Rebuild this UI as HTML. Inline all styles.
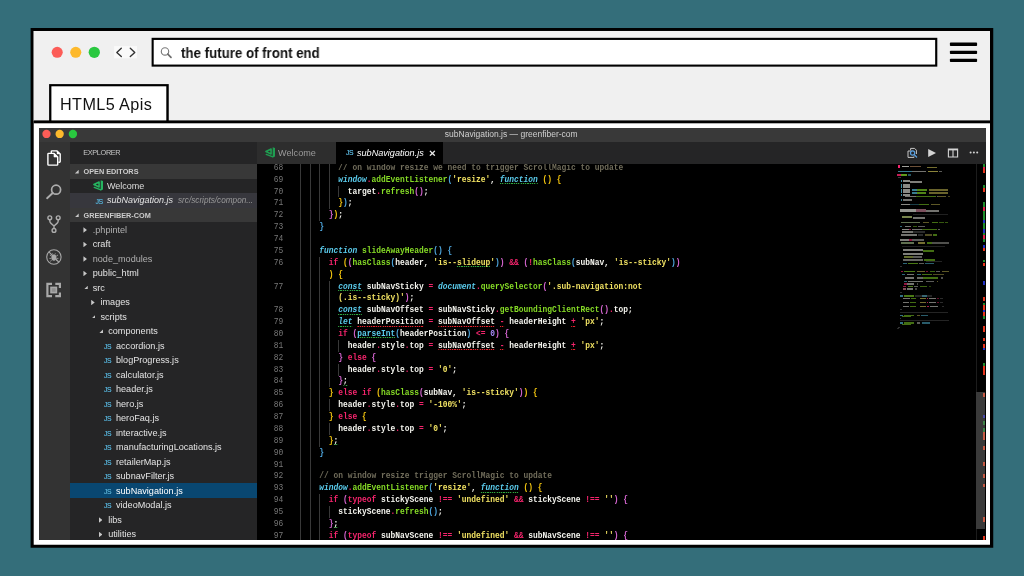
<!DOCTYPE html>
<html lang="en">
<head>
<meta charset="utf-8">
<title>HTML5 Apis</title>
<style>
*{box-sizing:border-box;margin:0;padding:0}
html,body{width:1024px;height:576px;overflow:hidden}
body{background:#346e7a;font-family:"Liberation Sans",sans-serif;position:relative}
.dot{position:absolute;border-radius:50%}
#q{position:absolute;left:181.4px;top:45px;font-weight:bold;font-size:14.3px;line-height:17px;color:#111;white-space:nowrap;transform:scaleX(.929);transform-origin:0 0;will-change:transform}
#tabt{position:absolute;left:59.8px;top:93.5px;font-size:16.2px;line-height:20px;color:#111;white-space:nowrap;letter-spacing:.4px;will-change:transform}

/* ---------- editor screenshot ---------- */
#shot{position:absolute;left:39px;top:128px;width:946.5px;height:412px;background:#000;overflow:hidden;font-family:"Liberation Sans",sans-serif;color:#ccc}
#shot div,#shot span,#shot i{position:absolute;display:block;white-space:nowrap}
#titlebar{left:0;top:0;width:946.5px;height:13.6px;background:#393939}
#title{left:0;width:944.5px;top:1px;text-align:center;font-size:8.5px;line-height:11px;color:#d0d0d0}
#act{left:0;top:13.6px;width:31px;height:399px;background:#333}
#side{left:31px;top:13.6px;width:186.5px;height:399px;background:#252526;overflow:hidden}
#tabs{left:217.5px;top:13.6px;width:729px;height:22.6px;background:#252526}
.sh{left:0;width:186.5px;height:14.4px;background:#383838;font-weight:bold;font-size:7.3px;line-height:16.4px;color:#ccc;letter-spacing:0}
.sh b{position:absolute;left:13.5px}
.sh .ao{left:4.9px;top:5.6px}
#explorer{left:13.3px;top:5.8px;font-size:7.3px;line-height:11px;color:#c6c6c6;letter-spacing:-.35px}
.tr{left:0;width:186.5px;height:14.5px;font-size:9.1px;line-height:14.5px;color:#e4e4e4}
.tr.dim{color:#b0b0b0}
.tr.sel{background:#094771;color:#fff;box-shadow:0 -1px 0 #094771}
.tl{top:0}
.ar{top:4.4px;width:3.5px;height:5.7px;background:#c8c8c8;clip-path:polygon(0 0,100% 50%,0 100%)}
.ao{top:4.9px;width:3.8px;height:3.8px;background:#c8c8c8;clip-path:polygon(100% 0,100% 100%,0 100%)}
.js{top:.9px;font-size:6.9px;color:#52a6ca;letter-spacing:-.45px;text-shadow:0 0 .5px #52a6ca}
.tr .js{top:.9px;font-size:6.9px;color:#52a6ca;letter-spacing:-.45px;text-shadow:0 0 .5px #52a6ca}
.oe{left:0;width:186.5px;height:14.5px;font-size:9px;line-height:15.6px;color:#ddd}
.desc{font-size:8.2px;color:#999;font-style:italic}

.etab{top:0;height:22.6px;font-size:9.1px;line-height:22.6px}
#shot .cl{left:0;height:12px;line-height:12px;font-family:"Liberation Mono",monospace;font-size:9.000px;font-weight:bold;color:#f4f4ee;white-space:pre;padding-left:296.94px;width:1100px;transform:scaleX(0.87963);transform-origin:0 0}
#shot .cl span{position:static;display:inline;white-space:pre}
#shot .cl .ln{position:absolute;display:block;left:254.65px;width:23.08px;text-align:right;color:#787878;font-weight:normal}
.cm{color:#716d5b}
.k,.o,.or{color:#f4246c}
.i,.ig{color:#5bcdee;font-style:italic}
.f{color:#86dc26}
.s,.sg{color:#f0e162}
.n{color:#a98bfa}
.bg{color:#5bcdee}
.c1{color:#f2c40f}
.c2{color:#d566d0}
.c3{color:#4ea6dd}
.ig,.sg,.bg,.wg{background:repeating-linear-gradient(90deg,#2fa83e 0 1.3px,rgba(47,168,62,.25) 1.3px 2.6px) 0 calc(100% - .4px)/100% 1.1px no-repeat}
.wr,.or{background:repeating-linear-gradient(90deg,#e8222c 0 1.3px,rgba(232,34,44,.25) 1.3px 2.6px) 0 calc(100% - .4px)/100% 1.1px no-repeat}
.gd{width:1px;background:#383838}
#mini{filter:blur(.35px)}
.ov{left:943.5px;width:2.9px}
</style>
</head>
<body>
<svg id="chrome" width="1024" height="576" viewBox="0 0 1024 576" style="position:absolute;left:0;top:0">
  <rect x="30.6" y="28" width="962.65" height="519.75" fill="#000"/>
  <rect x="33.7" y="31" width="956.3" height="513.75" fill="#fff"/>
  <rect x="33.7" y="31" width="956.3" height="90" fill="#f0f0f0"/>
  <rect x="33.7" y="120.4" width="956.3" height="2.9" fill="#000"/>
  <circle cx="57.2" cy="52.3" r="5.55" fill="#fc5c57"/>
  <circle cx="75.75" cy="52.3" r="5.55" fill="#fdb92c"/>
  <circle cx="94.3" cy="52.3" r="5.65" fill="#2ac840"/>
  <rect x="114.1" y="46.1" width="22.9" height="12.2" fill="#fafafa"/>
  <path d="M121.3 48.2 L116.8 52.4 L121.3 56.6 M130.3 48.2 L134.8 52.4 L130.3 56.6" fill="none" stroke="#333" stroke-width="1.35" stroke-linecap="round" stroke-linejoin="round"/>
  <rect x="151.6" y="37.8" width="785.7" height="28.85" fill="#000"/>
  <rect x="153.7" y="39.95" width="781.45" height="24.6" fill="#fff"/>
  <circle cx="165" cy="51.4" r="3.7" fill="none" stroke="#7a7a7a" stroke-width="1.15"/>
  <path d="M167.8 54.2 L171 57.3" stroke="#6c6c6c" stroke-width="1.7" stroke-linecap="round"/>
  <g fill="#000"><rect x="949.9" y="42.6" width="27.2" height="3.4" rx=".8"/><rect x="949.9" y="50.7" width="27.2" height="3.4" rx=".8"/><rect x="949.9" y="58.7" width="27.2" height="3.4" rx=".8"/></g>
  <rect x="49.1" y="84.1" width="119.65" height="37" fill="#000"/>
  <rect x="51.4" y="86.3" width="114.9" height="34.1" fill="#fff"/>
</svg>
<span id="q">the future of front end</span>
<span id="tabt">HTML5 Apis</span>

<div id="shot"><div id="ly" style="left:0;top:0;width:946.5px;height:412px;will-change:transform">
  <div id="titlebar">
    <svg width="50" height="14" viewBox="0 0 50 14" style="position:absolute;left:0;top:0"><circle cx="7.5" cy="5.95" r="4.15" fill="#fc5d57"/><circle cx="20.65" cy="5.95" r="4.15" fill="#fdb92c"/><circle cx="33.9" cy="5.95" r="4.2" fill="#29c73f"/></svg>
    <div id="title">subNavigation.js — greenfiber-com</div>
  </div>

  <div id="act">
    <svg width="31" height="180" viewBox="0 0 31 180" style="position:absolute;left:0;top:0">
      <!-- files -->
      <g fill="none" stroke="#fff" stroke-width="1.4" stroke-linejoin="round">
        <path d="M12.3 11.2 V9.6 Q12.3 8.9 13 8.9 H18 L21.2 12 V19.6 Q21.2 20.3 20.5 20.3 H19.4"/>
        <path d="M9.6 11.4 H15 L18.7 15 V22.4 Q18.7 23.1 18 23.1 H9.6 Q8.9 23.1 8.9 22.4 V12.1 Q8.9 11.4 9.6 11.4 Z"/>
        <path d="M15 11.4 V15 H18.7 Z" fill="#fff" stroke-width=".6"/>
        <path d="M18 8.9 V12 H21.2 Z" fill="#fff" stroke-width=".4"/>
      </g>
      <!-- search -->
      <g fill="none" stroke="#adadad" stroke-width="1.7" stroke-linecap="round">
        <circle cx="17.1" cy="47.7" r="4.5"/>
        <path d="M13.7 51 L8.1 56.2" stroke-width="1.9"/>
      </g>
      <!-- git -->
      <g fill="none" stroke="#adadad" stroke-width="1.4">
        <circle cx="10.8" cy="75.8" r="1.9"/>
        <circle cx="19.2" cy="75.8" r="1.9"/>
        <circle cx="15" cy="88.4" r="1.9"/>
        <path d="M10.8 77.7 V79 Q10.8 80.4 12 81.4 L15 84 L18 81.4 Q19.2 80.4 19.2 79 V77.7 M15 84 V86.5" stroke-linejoin="round"/>
      </g>
      <!-- debug -->
      <g fill="none" stroke="#a8a8a8" stroke-width="1.1">
        <circle cx="14.9" cy="115" r="7.2"/>
        <path d="M9.9 109.9 L19.9 120.1"/>
        <ellipse cx="14.9" cy="115.6" rx="2.5" ry="3.1" fill="#a8a8a8" stroke="none"/>
        <path d="M10.8 113 L12.6 114.2 M19 113 L17.2 114.2 M10.4 116.4 H12.4 M19.4 116.4 H17.4 M11.2 119.4 L12.8 118 M18.6 119.4 L17 118 M13.4 111.4 L14 112.6 M16.4 111.4 L15.8 112.6" stroke-width=".8"/>
      </g>
      <!-- extensions -->
      <g fill="#a8a8a8">
        <path d="M7.3 140.7 H13 V142.9 H9.5 V153 H13 V155.2 H7.3 Z"/>
        <path d="M22 140.7 H16.3 V142.9 H19.8 V146 H22 Z"/>
        <path d="M22 155.2 H16.3 V153 H19.8 V150.4 H22 Z"/>
        <rect x="11.2" y="144.6" width="7" height="6.8"/>
        <rect x="12.8" y="146.2" width="3.8" height="3.6" fill="#8e8e8e"/>
      </g>
    </svg>
  </div>

  <div id="side">
    <span id="explorer">EXPLORER</span>
    <div class="sh" style="top:22.6px"><span class="ao"></span><b>OPEN EDITORS</b></div>
    <div class="oe" style="top:37px">
      <svg width="10.4" height="10.6" viewBox="0 0 10.4 10.6" style="position:absolute;left:23.1px;top:1.9px"><path d="M7.7 .2 L10.3 1.2 V9.4 L7.7 10.4 Z" fill="#25b560"/><path d="M6.1 2 L.9 4.5 L6.1 7 Z" fill="none" stroke="#25b560" stroke-width="1.5" stroke-linejoin="round"/><path d="M1.2 7.4 L7.9 9.9" fill="none" stroke="#25b560" stroke-width="1.3" stroke-linecap="round"/></svg>
      <span class="tl" style="left:37px">Welcome</span>
    </div>
    <div class="oe" style="top:51.5px;height:14.7px;background:#37373d;color:#e4e4e4">
      <span class="js" style="left:25.5px">JS</span>
      <span class="tl" style="left:37px;font-style:italic">subNavigation.js</span>
      <span class="tl desc" style="left:108px">src/scripts/compon...</span>
    </div>
    <div class="sh" style="top:66.2px"><span class="ao"></span><b>GREENFIBER-COM</b></div>
<div class="tr dim" style="top:81.15px"><span class="ar" style="left:13.45px"></span><span class="tl" style="left:22.75px">.phpintel</span></div>
<div class="tr" style="top:95.65px"><span class="ar" style="left:13.45px"></span><span class="tl" style="left:22.75px">craft</span></div>
<div class="tr dim" style="top:110.15px"><span class="ar" style="left:13.45px"></span><span class="tl" style="left:22.75px">node_modules</span></div>
<div class="tr" style="top:124.65px"><span class="ar" style="left:13.45px"></span><span class="tl" style="left:22.75px">public_html</span></div>
<div class="tr" style="top:139.15px"><span class="ao" style="left:13.95px"></span><span class="tl" style="left:22.75px">src</span></div>
<div class="tr" style="top:153.65px"><span class="ar" style="left:21.20px"></span><span class="tl" style="left:30.50px">images</span></div>
<div class="tr" style="top:168.15px"><span class="ao" style="left:21.70px"></span><span class="tl" style="left:30.50px">scripts</span></div>
<div class="tr" style="top:182.65px"><span class="ao" style="left:29.45px"></span><span class="tl" style="left:38.25px">components</span></div>
<div class="tr" style="top:197.15px"><span class="js" style="left:34.00px">JS</span><span class="tl" style="left:46.00px">accordion.js</span></div>
<div class="tr" style="top:211.65px"><span class="js" style="left:34.00px">JS</span><span class="tl" style="left:46.00px">blogProgress.js</span></div>
<div class="tr" style="top:226.15px"><span class="js" style="left:34.00px">JS</span><span class="tl" style="left:46.00px">calculator.js</span></div>
<div class="tr" style="top:240.65px"><span class="js" style="left:34.00px">JS</span><span class="tl" style="left:46.00px">header.js</span></div>
<div class="tr" style="top:255.15px"><span class="js" style="left:34.00px">JS</span><span class="tl" style="left:46.00px">hero.js</span></div>
<div class="tr" style="top:269.65px"><span class="js" style="left:34.00px">JS</span><span class="tl" style="left:46.00px">heroFaq.js</span></div>
<div class="tr" style="top:284.15px"><span class="js" style="left:34.00px">JS</span><span class="tl" style="left:46.00px">interactive.js</span></div>
<div class="tr" style="top:298.65px"><span class="js" style="left:34.00px">JS</span><span class="tl" style="left:46.00px">manufacturingLocations.js</span></div>
<div class="tr" style="top:313.15px"><span class="js" style="left:34.00px">JS</span><span class="tl" style="left:46.00px">retailerMap.js</span></div>
<div class="tr" style="top:327.65px"><span class="js" style="left:34.00px">JS</span><span class="tl" style="left:46.00px">subnavFilter.js</span></div>
<div class="tr sel" style="top:342.15px"><span class="js" style="left:34.00px">JS</span><span class="tl" style="left:46.00px">subNavigation.js</span></div>
<div class="tr" style="top:356.65px"><span class="js" style="left:34.00px">JS</span><span class="tl" style="left:46.00px">videoModal.js</span></div>
<div class="tr" style="top:371.15px"><span class="ar" style="left:28.95px"></span><span class="tl" style="left:38.25px">libs</span></div>
<div class="tr" style="top:385.65px"><span class="ar" style="left:28.95px"></span><span class="tl" style="left:38.25px">utilities</span></div>
  </div>

  <div id="tabs">
    <div class="etab" style="left:0;width:79px;background:#2d2d2d;color:#9a9a9a">
      <svg width="10.4" height="10.6" viewBox="0 0 10.4 10.6" style="position:absolute;left:8.2px;top:5.8px"><path d="M7.7 .2 L10.3 1.2 V9.4 L7.7 10.4 Z" fill="#1f9d51"/><path d="M6.1 2 L.9 4.5 L6.1 7 Z" fill="none" stroke="#1f9d51" stroke-width="1.5" stroke-linejoin="round"/><path d="M1.2 7.4 L7.9 9.9" fill="none" stroke="#1f9d51" stroke-width="1.3" stroke-linecap="round"/></svg>
      <span style="left:21.6px;top:0">Welcome</span>
    </div>
    <div class="etab" style="left:79px;width:107px;background:#000;color:#fff">
      <span class="js" style="left:10.5px;top:.6px">JS</span>
      <span style="left:21.5px;top:0;font-style:italic">subNavigation.js</span>
      <span style="left:93.6px;top:.6px;font-size:11.5px;font-weight:bold;color:#eee">&#215;</span>
    </div>
    <svg width="80" height="14" viewBox="0 0 80 14" style="position:absolute;left:646px;top:4.4px">
      <!-- find in file -->
      <g fill="none" stroke="#c5c5c5" stroke-width="1">
        <path d="M7.6 4.2 V2.4 H11.6 L13.4 4.2 V8"/>
        <path d="M5 5 H8.4 M5 5 V11.4 H11 V10.4"/>
      </g>
      <circle cx="9.6" cy="7" r="2.1" fill="none" stroke="#5aa0e0" stroke-width="1.2"/>
      <path d="M11.2 8.6 L13.6 11" stroke="#5aa0e0" stroke-width="1.3" stroke-linecap="round"/>
      <!-- play -->
      <path d="M25.2 2.9 L33 7 L25.2 11.1 Z" fill="#d4d4d4"/>
      <!-- split -->
      <path d="M45.4 3 H54.6 V11 H45.4 Z M50 3 V11" fill="none" stroke="#d4d4d4" stroke-width="1.1"/>
      <path d="M45.4 3 H54.6 V4.4 H45.4 Z" fill="#d4d4d4"/>
      <!-- more -->
      <circle cx="67.6" cy="6.6" r="1" fill="#d4d4d4"/><circle cx="70.9" cy="6.6" r="1" fill="#d4d4d4"/><circle cx="74.2" cy="6.6" r="1" fill="#d4d4d4"/>
    </svg>
  </div>

  <div id="editor" style="left:217.5px;top:36.2px;width:729px;height:376px;overflow:hidden">
    <div style="left:-217.5px;top:-36.2px;width:946.5px;height:412px;will-change:transform">
<i class="gd" style="left:261.20px;top:33.87px;height:379.84px"></i>
<i class="gd" style="left:270.70px;top:33.87px;height:379.84px"></i>
<i class="gd" style="left:280.20px;top:33.87px;height:59.35px"></i>
<i class="gd" style="left:280.20px;top:128.82px;height:189.92px"></i>
<i class="gd" style="left:280.20px;top:366.22px;height:47.48px"></i>
<i class="gd" style="left:289.70px;top:33.87px;height:47.48px"></i>
<i class="gd" style="left:289.70px;top:152.56px;height:106.83px"></i>
<i class="gd" style="left:289.70px;top:271.26px;height:11.87px"></i>
<i class="gd" style="left:289.70px;top:295.00px;height:11.87px"></i>
<i class="gd" style="left:289.70px;top:378.09px;height:11.87px"></i>
<i class="gd" style="left:299.20px;top:57.61px;height:11.87px"></i>
<i class="gd" style="left:299.20px;top:211.91px;height:11.87px"></i>
<i class="gd" style="left:299.20px;top:235.66px;height:11.87px"></i>
<div class="cl" style="top:33.80px"><span class="ln">68</span>        <span class="cm">// on window resize we need to trigger ScrollMagic to update</span></div>
<div class="cl" style="top:45.67px"><span class="ln">69</span>        <span class="i">window</span><span class="o">.</span><span class="f">addEventListener</span><span class="c3">(</span><span class="s">&#x27;resize&#x27;</span>, <span class="ig">function</span> <span class="c1">()</span> <span class="c1">{</span></div>
<div class="cl" style="top:57.54px"><span class="ln">70</span>          target<span class="o">.</span><span class="f">refresh</span><span class="c2">()</span>;</div>
<div class="cl" style="top:69.41px"><span class="ln">71</span>        <span class="c1">}</span><span class="c3">)</span>;</div>
<div class="cl" style="top:81.28px"><span class="ln">72</span>      <span class="c2">}</span><span class="c1">)</span>;</div>
<div class="cl" style="top:93.15px"><span class="ln">73</span>    <span class="c3">}</span></div>
<div class="cl" style="top:105.02px"><span class="ln">74</span></div>
<div class="cl" style="top:116.89px"><span class="ln">75</span>    <span class="i">function</span> <span class="f">slideAwayHeader</span><span class="c3">()</span> <span class="c3">{</span></div>
<div class="cl" style="top:128.76px"><span class="ln">76</span>      <span class="k">if</span> <span class="c1">(</span><span class="c2">(</span><span class="f">hasClass</span><span class="c3">(</span>header, <span class="s">&#x27;is--</span><span class="sg">slideup</span><span class="s">&#x27;</span><span class="c3">)</span><span class="c2">)</span> <span class="k">&amp;&amp;</span> <span class="c2">(</span><span class="k">!</span><span class="f">hasClass</span><span class="c3">(</span>subNav, <span class="s">&#x27;is--sticky&#x27;</span><span class="c3">)</span><span class="c2">)</span></div>
<div class="cl" style="top:140.63px"><span class="ln"></span>      <span class="c1">)</span> <span class="c1">{</span></div>
<div class="cl" style="top:152.50px"><span class="ln">77</span>        <span class="ig">const</span> subNavSticky <span class="o">=</span> <span class="i">document</span><span class="o">.</span><span class="f">querySelector</span><span class="c2">(</span><span class="s">&#x27;.sub-navigation:not</span></div>
<div class="cl" style="top:164.37px"><span class="ln"></span>        <span class="s">(.is--sticky)&#x27;</span><span class="c2">)</span>;</div>
<div class="cl" style="top:176.24px"><span class="ln">78</span>        <span class="ig">const</span> subNavOffset <span class="o">=</span> subNavSticky<span class="o">.</span><span class="f">getBoundingClientRect</span><span class="c2">()</span><span class="o">.</span>top;</div>
<div class="cl" style="top:188.11px"><span class="ln">79</span>        <span class="ig">let</span> <span class="wr">headerPosition</span> <span class="o">=</span> <span class="wr">subNavOffset</span> <span class="or">-</span> headerHeight <span class="or">+</span> <span class="s">&#x27;px&#x27;</span>;</div>
<div class="cl" style="top:199.98px"><span class="ln">80</span>        <span class="k">if</span> <span class="c2">(</span><span class="bg">parseInt</span><span class="c3">(</span>headerPosition<span class="c3">)</span> <span class="o">&lt;=</span> <span class="n">0</span><span class="c2">)</span> <span class="c2">{</span></div>
<div class="cl" style="top:211.85px"><span class="ln">81</span>          header<span class="o">.</span>style<span class="o">.</span>top <span class="o">=</span> <span class="wr">subNavOffset</span> <span class="or">-</span> headerHeight <span class="or">+</span> <span class="s">&#x27;px&#x27;</span>;</div>
<div class="cl" style="top:223.72px"><span class="ln">82</span>        <span class="c2">}</span> <span class="k">else</span> <span class="c2">{</span></div>
<div class="cl" style="top:235.59px"><span class="ln">83</span>          header<span class="o">.</span>style<span class="o">.</span>top <span class="o">=</span> <span class="s">&#x27;0&#x27;</span>;</div>
<div class="cl" style="top:247.46px"><span class="ln">84</span>        <span class="c2">}</span><span class="wg">;</span></div>
<div class="cl" style="top:259.33px"><span class="ln">85</span>      <span class="c1">}</span> <span class="k">else if</span> <span class="c1">(</span><span class="f">hasClass</span><span class="c2">(</span>subNav, <span class="s">&#x27;is--sticky&#x27;</span><span class="c2">)</span><span class="c1">)</span> <span class="c1">{</span></div>
<div class="cl" style="top:271.20px"><span class="ln">86</span>        header<span class="o">.</span>style<span class="o">.</span>top <span class="o">=</span> <span class="s">&#x27;-100%&#x27;</span>;</div>
<div class="cl" style="top:283.07px"><span class="ln">87</span>      <span class="c1">}</span> <span class="k">else</span> <span class="c1">{</span></div>
<div class="cl" style="top:294.94px"><span class="ln">88</span>        header<span class="o">.</span>style<span class="o">.</span>top <span class="o">=</span> <span class="s">&#x27;0&#x27;</span>;</div>
<div class="cl" style="top:306.81px"><span class="ln">89</span>      <span class="c1">}</span><span class="wg">;</span></div>
<div class="cl" style="top:318.68px"><span class="ln">90</span>    <span class="c3">}</span></div>
<div class="cl" style="top:330.55px"><span class="ln">91</span></div>
<div class="cl" style="top:342.42px"><span class="ln">92</span>    <span class="cm">// on window resize trigger ScrollMagic to update</span></div>
<div class="cl" style="top:354.29px"><span class="ln">93</span>    <span class="i">window</span><span class="o">.</span><span class="f">addEventListener</span><span class="c3">(</span><span class="s">&#x27;resize&#x27;</span>, <span class="ig">function</span> <span class="c1">()</span> <span class="c1">{</span></div>
<div class="cl" style="top:366.16px"><span class="ln">94</span>      <span class="k">if</span> <span class="c2">(</span><span class="k">typeof</span> stickyScene <span class="k">!==</span> <span class="s">&#x27;undefined&#x27;</span> <span class="k">&amp;&amp;</span> stickyScene <span class="k">!==</span> <span class="s">&#x27;&#x27;</span><span class="c2">)</span> <span class="c2">{</span></div>
<div class="cl" style="top:378.03px"><span class="ln">95</span>        stickyScene<span class="o">.</span><span class="f">refresh</span><span class="c3">()</span>;</div>
<div class="cl" style="top:389.90px"><span class="ln">96</span>      <span class="c2">}</span><span class="wg">;</span></div>
<div class="cl" style="top:401.77px"><span class="ln">97</span>      <span class="k">if</span> <span class="c2">(</span><span class="k">typeof</span> subNavScene <span class="k">!==</span> <span class="s">&#x27;undefined&#x27;</span> <span class="k">&amp;&amp;</span> subNavScene <span class="k">!==</span> <span class="s">&#x27;&#x27;</span><span class="c2">)</span> <span class="c2">{</span></div>
      <div id="mini" style="left:0;top:0;width:946.5px;height:412px">
<i style="left:858.7px;top:36.8px;width:2.6px;height:3.2px;background:repeating-linear-gradient(180deg,#f4246c 0 .85px,transparent .85px 1.25px);opacity:1.00"></i>
<i style="left:863.0px;top:37.6px;width:6.7px;height:1.4px;background:#e6e6de;opacity:0.70"></i>
<i style="left:870.7px;top:37.6px;width:11.3px;height:1.4px;background:#d8a070;opacity:0.50"></i>
<i style="left:888.0px;top:39.2px;width:10.0px;height:1.1px;background:#e8dc60;opacity:0.50"></i>
<i style="left:859.0px;top:43.0px;width:14.0px;height:1.3px;background:#5bcdee;opacity:0.60"></i>
<i style="left:873.0px;top:43.0px;width:14.0px;height:1.3px;background:#e6e6de;opacity:0.50"></i>
<i style="left:889.0px;top:43.0px;width:10.0px;height:1.3px;background:#e8dc60;opacity:0.60"></i>
<i style="left:900.0px;top:43.0px;width:2.5px;height:1.3px;background:#e6e6de;opacity:0.40"></i>
<i style="left:858.2px;top:46.4px;width:3.8px;height:1.3px;background:#f4246c;opacity:0.80"></i>
<i style="left:862.0px;top:46.4px;width:5.6px;height:1.3px;background:#86dc26;opacity:0.70"></i>
<i style="left:868.6px;top:46.4px;width:3.4px;height:1.3px;background:#5bcdee;opacity:0.40"></i>
<i style="left:859.0px;top:49.0px;width:3.0px;height:1.1px;background:#909090;opacity:0.40"></i>
<i style="left:861.9px;top:51.7px;width:1.5px;height:16.7px;background:repeating-linear-gradient(180deg,#5bcdee 0 .85px,transparent .85px 1.25px);opacity:0.70"></i>
<i style="left:864.0px;top:51.7px;width:6.7px;height:16.7px;background:repeating-linear-gradient(180deg,#e6e6de 0 .85px,transparent .85px 1.25px);opacity:0.60"></i>
<i style="left:870.7px;top:52.7px;width:12.3px;height:3.3px;background:repeating-linear-gradient(180deg,#e6e6de 0 .85px,transparent .85px 1.25px);opacity:0.55"></i>
<i style="left:872.8px;top:60.6px;width:5.2px;height:2.0px;background:#5bcdee;opacity:0.60"></i>
<i style="left:878.0px;top:60.6px;width:10.4px;height:2.0px;background:#86dc26;opacity:0.60"></i>
<i style="left:889.5px;top:60.6px;width:19.5px;height:2.0px;background:#e8dc60;opacity:0.45"></i>
<i style="left:872.8px;top:64.2px;width:5.2px;height:2.0px;background:#5bcdee;opacity:0.60"></i>
<i style="left:878.0px;top:64.2px;width:9.4px;height:2.0px;background:#86dc26;opacity:0.60"></i>
<i style="left:889.5px;top:64.2px;width:19.5px;height:2.0px;background:#e8dc60;opacity:0.45"></i>
<i style="left:865.5px;top:67.8px;width:11.5px;height:1.3px;background:#e6e6de;opacity:0.50"></i>
<i style="left:877.0px;top:67.8px;width:19.7px;height:1.3px;background:#86dc26;opacity:0.50"></i>
<i style="left:897.8px;top:67.8px;width:1.2px;height:1.3px;background:#e6e6de;opacity:0.40"></i>
<i style="left:899.0px;top:67.8px;width:8.0px;height:1.3px;background:#e8dc60;opacity:0.40"></i>
<i style="left:909.0px;top:67.8px;width:2.0px;height:1.3px;background:#e8dc60;opacity:0.30"></i>
<i style="left:861.9px;top:71.4px;width:1.5px;height:1.3px;background:#5bcdee;opacity:0.60"></i>
<i style="left:864.0px;top:71.4px;width:8.8px;height:1.3px;background:#e6e6de;opacity:0.50"></i>
<i style="left:862.4px;top:75.6px;width:8.3px;height:1.3px;background:#e6e6de;opacity:0.60"></i>
<i style="left:870.7px;top:75.6px;width:9.3px;height:1.3px;background:#5bcdee;opacity:0.30"></i>
<i style="left:880.0px;top:75.6px;width:9.5px;height:1.3px;background:#86dc26;opacity:0.50"></i>
<i style="left:891.5px;top:75.6px;width:9.5px;height:1.3px;background:#e8dc60;opacity:0.40"></i>
<i style="left:861.0px;top:80.9px;width:16.0px;height:4.1px;background:repeating-linear-gradient(180deg,#e6e6de 0 .85px,transparent .85px 1.25px);opacity:0.65"></i>
<i style="left:877.0px;top:80.9px;width:10.4px;height:3.4px;background:repeating-linear-gradient(180deg,#e090a8 0 .85px,transparent .85px 1.25px);opacity:0.55"></i>
<i style="left:887.0px;top:81.9px;width:12.9px;height:3.1px;background:repeating-linear-gradient(180deg,#e6e6de 0 .85px,transparent .85px 1.25px);opacity:0.50"></i>
<i style="left:874.0px;top:86.1px;width:35.0px;height:1.0px;background:#909090;opacity:0.22"></i>
<i style="left:863.0px;top:88.0px;width:10.0px;height:4.0px;background:repeating-linear-gradient(180deg,#c8dc80 0 .85px,transparent .85px 1.25px);opacity:0.60"></i>
<i style="left:873.8px;top:88.5px;width:12.2px;height:3.2px;background:repeating-linear-gradient(180deg,#e6e6de 0 .85px,transparent .85px 1.25px);opacity:0.50"></i>
<i style="left:862.4px;top:93.6px;width:18.6px;height:1.3px;background:#c0e0a0;opacity:0.50"></i>
<i style="left:884.0px;top:93.6px;width:6.0px;height:1.3px;background:#e8dc60;opacity:0.40"></i>
<i style="left:892.6px;top:93.6px;width:6.2px;height:1.3px;background:#86dc26;opacity:0.50"></i>
<i style="left:900.0px;top:93.6px;width:5.0px;height:1.3px;background:#86dc26;opacity:0.40"></i>
<i style="left:906.0px;top:93.6px;width:3.0px;height:1.3px;background:#86dc26;opacity:0.40"></i>
<i style="left:861.3px;top:97.8px;width:2.1px;height:1.3px;background:#5bcdee;opacity:0.50"></i>
<i style="left:866.0px;top:97.8px;width:5.8px;height:1.3px;background:#e6e6de;opacity:0.50"></i>
<i style="left:874.4px;top:97.8px;width:3.6px;height:1.3px;background:#86dc26;opacity:0.40"></i>
<i style="left:879.0px;top:97.8px;width:7.3px;height:1.3px;background:#e6e6de;opacity:0.40"></i>
<i style="left:863.0px;top:100.9px;width:6.7px;height:1.3px;background:#e6e6de;opacity:0.60"></i>
<i style="left:870.2px;top:100.9px;width:2.1px;height:1.3px;background:#f4246c;opacity:0.60"></i>
<i style="left:872.8px;top:100.9px;width:10.2px;height:1.3px;background:#e6e6de;opacity:0.50"></i>
<i style="left:883.0px;top:100.9px;width:14.8px;height:1.3px;background:#86dc26;opacity:0.50"></i>
<i style="left:898.8px;top:100.9px;width:2.6px;height:1.3px;background:#e6e6de;opacity:0.40"></i>
<i style="left:863.0px;top:103.4px;width:10.8px;height:1.3px;background:#e6e6de;opacity:0.50"></i>
<i style="left:873.8px;top:103.4px;width:12.5px;height:1.3px;background:#909090;opacity:0.30"></i>
<i style="left:861.9px;top:106.4px;width:16.1px;height:2.0px;background:#e6e6de;opacity:0.50"></i>
<i style="left:879.0px;top:106.4px;width:5.0px;height:2.0px;background:#909090;opacity:0.30"></i>
<i style="left:886.3px;top:106.4px;width:6.3px;height:1.6px;background:#e8dc60;opacity:0.35"></i>
<i style="left:894.0px;top:106.4px;width:3.8px;height:1.6px;background:#86dc26;opacity:0.50"></i>
<i style="left:861.0px;top:111.3px;width:8.7px;height:1.3px;background:#e6e6de;opacity:0.55"></i>
<i style="left:870.2px;top:111.3px;width:2.6px;height:1.3px;background:#f4246c;opacity:0.60"></i>
<i style="left:873.0px;top:111.3px;width:12.3px;height:1.3px;background:#e6e6de;opacity:0.40"></i>
<i style="left:862.4px;top:114.4px;width:12.5px;height:1.3px;background:#c0e0a0;opacity:0.50"></i>
<i style="left:878.5px;top:114.4px;width:7.8px;height:1.3px;background:#e8dc60;opacity:0.50"></i>
<i style="left:888.0px;top:114.4px;width:4.6px;height:1.3px;background:#86dc26;opacity:0.50"></i>
<i style="left:893.0px;top:114.4px;width:17.0px;height:1.3px;background:#e6e6de;opacity:0.35"></i>
<i style="left:863.0px;top:118.1px;width:43.0px;height:1.0px;background:#909090;opacity:0.22"></i>
<i style="left:864.0px;top:121.0px;width:20.0px;height:5.5px;background:repeating-linear-gradient(180deg,#e6e6de 0 .85px,transparent .85px 1.25px);opacity:0.55"></i>
<i style="left:884.0px;top:122.3px;width:10.7px;height:2.1px;background:#86dc26;opacity:0.50"></i>
<i style="left:865.0px;top:127.5px;width:8.8px;height:2.1px;background:#c8dc60;opacity:0.50"></i>
<i style="left:873.8px;top:127.5px;width:9.2px;height:2.1px;background:#e6e6de;opacity:0.40"></i>
<i style="left:864.0px;top:131.0px;width:20.0px;height:1.7px;background:#e6e6de;opacity:0.45"></i>
<i style="left:885.0px;top:131.0px;width:10.7px;height:1.7px;background:#86dc26;opacity:0.50"></i>
<i style="left:887.4px;top:132.9px;width:15.6px;height:1.0px;background:#909090;opacity:0.25"></i>
<i style="left:864.0px;top:134.6px;width:4.0px;height:1.3px;background:#5bcdee;opacity:0.50"></i>
<i style="left:868.6px;top:134.6px;width:10.4px;height:1.3px;background:#86dc26;opacity:0.55"></i>
<i style="left:879.5px;top:134.6px;width:5.8px;height:1.3px;background:#e6e6de;opacity:0.40"></i>
<i style="left:886.0px;top:134.6px;width:8.7px;height:1.3px;background:#5bcdee;opacity:0.45"></i>
<i style="left:860.8px;top:137.9px;width:2.6px;height:1.0px;background:#909090;opacity:0.35"></i>
<i style="left:861.9px;top:143.0px;width:2.6px;height:1.3px;background:#f4246c;opacity:0.60"></i>
<i style="left:865.0px;top:143.0px;width:11.0px;height:1.3px;background:#86dc26;opacity:0.55"></i>
<i style="left:878.0px;top:143.0px;width:8.0px;height:1.3px;background:#e8dc60;opacity:0.45"></i>
<i style="left:887.4px;top:143.0px;width:2.1px;height:1.3px;background:#f4246c;opacity:0.50"></i>
<i style="left:890.5px;top:143.0px;width:5.2px;height:1.3px;background:#86dc26;opacity:0.45"></i>
<i style="left:896.8px;top:143.0px;width:4.2px;height:1.3px;background:#e6e6de;opacity:0.40"></i>
<i style="left:902.5px;top:143.0px;width:7.5px;height:1.3px;background:#e8dc60;opacity:0.40"></i>
<i style="left:863.4px;top:146.2px;width:3.1px;height:1.3px;background:#5bcdee;opacity:0.50"></i>
<i style="left:867.6px;top:146.2px;width:7.8px;height:1.3px;background:#e6e6de;opacity:0.50"></i>
<i style="left:877.5px;top:146.2px;width:4.7px;height:1.3px;background:#5bcdee;opacity:0.50"></i>
<i style="left:883.2px;top:146.2px;width:9.4px;height:1.3px;background:#86dc26;opacity:0.50"></i>
<i style="left:894.0px;top:146.2px;width:11.0px;height:1.3px;background:#e8dc60;opacity:0.35"></i>
<i style="left:865.5px;top:149.0px;width:9.9px;height:1.7px;background:#e6e6de;opacity:0.50"></i>
<i style="left:877.5px;top:149.0px;width:6.5px;height:1.7px;background:#e6e6de;opacity:0.45"></i>
<i style="left:884.0px;top:149.0px;width:14.8px;height:1.7px;background:#86dc26;opacity:0.50"></i>
<i style="left:902.0px;top:149.0px;width:2.0px;height:1.7px;background:#e6e6de;opacity:0.35"></i>
<i style="left:865.0px;top:152.6px;width:3.0px;height:1.3px;background:#5bcdee;opacity:0.50"></i>
<i style="left:868.6px;top:152.6px;width:15.4px;height:1.3px;background:#e6e6de;opacity:0.50"></i>
<i style="left:887.4px;top:152.6px;width:7.3px;height:1.3px;background:#e6e6de;opacity:0.40"></i>
<i style="left:897.8px;top:152.6px;width:1.0px;height:1.3px;background:#e8dc60;opacity:0.40"></i>
<i style="left:865.0px;top:155.4px;width:2.6px;height:1.3px;background:#f4246c;opacity:0.60"></i>
<i style="left:867.6px;top:155.4px;width:7.8px;height:1.3px;background:#e6e6de;opacity:0.50"></i>
<i style="left:878.0px;top:155.4px;width:1.0px;height:1.3px;background:#e6e6de;opacity:0.30"></i>
<i style="left:864.0px;top:158.0px;width:2.5px;height:1.3px;background:#f4246c;opacity:0.60"></i>
<i style="left:868.6px;top:158.0px;width:5.8px;height:1.3px;background:#86dc26;opacity:0.55"></i>
<i style="left:875.4px;top:158.0px;width:4.1px;height:1.3px;background:#e6e6de;opacity:0.40"></i>
<i style="left:881.0px;top:158.0px;width:7.4px;height:1.3px;background:#86dc26;opacity:0.45"></i>
<i style="left:889.5px;top:158.0px;width:2.0px;height:1.3px;background:#86dc26;opacity:0.30"></i>
<i style="left:864.0px;top:160.0px;width:3.0px;height:2.0px;background:#e890a8;opacity:0.55"></i>
<i style="left:868.0px;top:160.0px;width:6.4px;height:2.0px;background:#e6e6de;opacity:0.50"></i>
<i style="left:876.4px;top:160.0px;width:1.6px;height:2.0px;background:#e6e6de;opacity:0.30"></i>
<i style="left:860.8px;top:164.3px;width:2.1px;height:1.0px;background:#909090;opacity:0.35"></i>
<i style="left:861.3px;top:167.3px;width:3.2px;height:1.3px;background:#5bcdee;opacity:0.55"></i>
<i style="left:865.0px;top:167.3px;width:10.4px;height:1.3px;background:#86dc26;opacity:0.55"></i>
<i style="left:876.0px;top:167.3px;width:16.6px;height:1.3px;background:#909090;opacity:0.25"></i>
<i style="left:883.0px;top:167.3px;width:5.4px;height:1.3px;background:#5bcdee;opacity:0.40"></i>
<i style="left:864.0px;top:169.6px;width:6.7px;height:1.4px;background:#e6e6de;opacity:0.50"></i>
<i style="left:871.8px;top:169.6px;width:5.2px;height:1.4px;background:#86dc26;opacity:0.50"></i>
<i style="left:880.6px;top:169.6px;width:6.3px;height:1.4px;background:#e8dc60;opacity:0.50"></i>
<i style="left:887.9px;top:169.6px;width:1.1px;height:1.4px;background:#f4246c;opacity:0.70"></i>
<i style="left:889.5px;top:169.6px;width:7.2px;height:1.4px;background:#e6e6de;opacity:0.50"></i>
<i style="left:897.8px;top:169.6px;width:2.1px;height:1.4px;background:#f4246c;opacity:0.40"></i>
<i style="left:901.4px;top:169.6px;width:2.6px;height:1.4px;background:#909090;opacity:0.30"></i>
<i style="left:864.0px;top:173.5px;width:6.2px;height:1.4px;background:#e6e6de;opacity:0.50"></i>
<i style="left:870.7px;top:173.5px;width:6.3px;height:1.4px;background:#86dc26;opacity:0.50"></i>
<i style="left:880.6px;top:173.5px;width:6.3px;height:1.4px;background:#e8dc60;opacity:0.50"></i>
<i style="left:887.9px;top:173.5px;width:1.1px;height:1.4px;background:#f4246c;opacity:0.70"></i>
<i style="left:890.0px;top:173.5px;width:6.8px;height:1.4px;background:#e6e6de;opacity:0.50"></i>
<i style="left:897.8px;top:173.5px;width:2.1px;height:1.4px;background:#f4246c;opacity:0.40"></i>
<i style="left:901.4px;top:173.5px;width:2.6px;height:1.4px;background:#909090;opacity:0.30"></i>
<i style="left:864.0px;top:177.7px;width:6.2px;height:1.4px;background:#e6e6de;opacity:0.50"></i>
<i style="left:870.7px;top:177.7px;width:6.8px;height:1.4px;background:#86dc26;opacity:0.50"></i>
<i style="left:880.6px;top:177.7px;width:6.3px;height:1.4px;background:#e8dc60;opacity:0.50"></i>
<i style="left:888.4px;top:177.7px;width:1.6px;height:1.4px;background:#f4246c;opacity:0.70"></i>
<i style="left:890.5px;top:177.7px;width:8.3px;height:1.4px;background:#e6e6de;opacity:0.50"></i>
<i style="left:903.0px;top:177.7px;width:1.5px;height:1.4px;background:#909090;opacity:0.30"></i>
<i style="left:860.8px;top:181.0px;width:2.1px;height:1.0px;background:#909090;opacity:0.35"></i>
<i style="left:861.3px;top:184.0px;width:47.4px;height:1.0px;background:#909090;opacity:0.25"></i>
<i style="left:861.3px;top:186.5px;width:3.2px;height:1.3px;background:#5bcdee;opacity:0.55"></i>
<i style="left:864.5px;top:186.5px;width:10.9px;height:1.3px;background:#86dc26;opacity:0.50"></i>
<i style="left:878.0px;top:186.5px;width:2.6px;height:1.3px;background:#e8dc60;opacity:0.40"></i>
<i style="left:881.6px;top:186.5px;width:7.9px;height:1.3px;background:#5bcdee;opacity:0.45"></i>
<i style="left:863.0px;top:188.0px;width:9.3px;height:1.3px;background:#86dc26;opacity:0.50"></i>
<i style="left:860.8px;top:189.9px;width:1.6px;height:1.0px;background:#909090;opacity:0.35"></i>
<i style="left:861.3px;top:191.9px;width:48.5px;height:1.0px;background:#909090;opacity:0.25"></i>
<i style="left:861.3px;top:194.4px;width:3.2px;height:1.3px;background:#5bcdee;opacity:0.55"></i>
<i style="left:864.5px;top:194.4px;width:10.9px;height:1.3px;background:#86dc26;opacity:0.50"></i>
<i style="left:877.5px;top:194.4px;width:3.1px;height:1.3px;background:#e6e6de;opacity:0.40"></i>
<i style="left:883.2px;top:194.4px;width:8.3px;height:1.3px;background:#5bcdee;opacity:0.45"></i>
<i style="left:863.0px;top:195.9px;width:9.3px;height:1.3px;background:#86dc26;opacity:0.50"></i>
<i style="left:859.2px;top:198.6px;width:2.1px;height:1.0px;background:#909090;opacity:0.35"></i>
<i style="left:858.2px;top:200.2px;width:1.6px;height:1.0px;background:#909090;opacity:0.30"></i>
      </div>
      <i style="left:937px;top:36.2px;width:1px;height:376px;background:#1c1c1c"></i>
      <i style="left:937.2px;top:264px;width:9.3px;height:137px;background:#3a3a3a"></i>
<i class="ov" style="top:35.7px;height:3.3px;background:#1e8c2c"></i>
<i class="ov" style="top:39.0px;height:2.2px;background:#e0204a"></i>
<i class="ov" style="top:41.2px;height:4.1px;background:#e8341c"></i>
<i class="ov" style="top:57.3px;height:3.0px;background:#1e8c2c"></i>
<i class="ov" style="top:60.3px;height:3.7px;background:#e8341c"></i>
<i class="ov" style="top:73.7px;height:5.3px;background:#1e8c2c"></i>
<i class="ov" style="top:79.0px;height:3.8px;background:#e0204a"></i>
<i class="ov" style="top:82.8px;height:9.2px;background:#1e8c2c"></i>
<i class="ov" style="top:92.0px;height:3.3px;background:#2030c4"></i>
<i class="ov" style="top:95.3px;height:5.9px;background:#1e8c2c"></i>
<i class="ov" style="top:101.2px;height:4.1px;background:#2030c4"></i>
<i class="ov" style="top:105.3px;height:2.0px;background:#1e8c2c"></i>
<i class="ov" style="top:107.3px;height:3.9px;background:#e0204a"></i>
<i class="ov" style="top:111.2px;height:2.5px;background:#1e8c2c"></i>
<i class="ov" style="top:117.0px;height:2.5px;background:#2030c4"></i>
<i class="ov" style="top:119.5px;height:3.8px;background:#e8341c"></i>
<i class="ov" style="top:132.3px;height:2.2px;background:#1e8c2c"></i>
<i class="ov" style="top:134.5px;height:3.8px;background:#e8341c"></i>
<i class="ov" style="top:153.3px;height:4.0px;background:#2030c4"></i>
<i class="ov" style="top:169.0px;height:3.8px;background:#e8341c"></i>
<i class="ov" style="top:175.0px;height:2.0px;background:#1e8c2c"></i>
<i class="ov" style="top:177.0px;height:5.0px;background:#e8341c"></i>
<i class="ov" style="top:182.0px;height:2.0px;background:#2030c4"></i>
<i class="ov" style="top:184.0px;height:4.3px;background:#e8341c"></i>
<i class="ov" style="top:188.3px;height:2.9px;background:#1e8c2c"></i>
<i class="ov" style="top:197.8px;height:5.9px;background:#e8341c"></i>
<i class="ov" style="top:209.5px;height:3.8px;background:#e8341c"></i>
<i class="ov" style="top:216.2px;height:3.8px;background:#e8341c"></i>
<i class="ov" style="top:220.0px;height:2.3px;background:#2030c4"></i>
<i class="ov" style="top:234.5px;height:3.3px;background:#1e8c2c"></i>
<i class="ov" style="top:237.8px;height:9.2px;background:#e8341c"></i>
<i class="ov" style="top:265.3px;height:3.7px;background:#c85a44"></i>
<i class="ov" style="top:287.0px;height:3.3px;background:#4a4aa8"></i>
<i class="ov" style="top:292.8px;height:4.2px;background:#3f8248"></i>
<i class="ov" style="top:299.5px;height:4.0px;background:#3f8248"></i>
<i class="ov" style="top:303.5px;height:8.5px;background:#c85a44"></i>
<i class="ov" style="top:318.2px;height:3.6px;background:#c85a44"></i>
<i class="ov" style="top:333.7px;height:3.9px;background:#c85a44"></i>
<i class="ov" style="top:346.0px;height:4.0px;background:#c85a44"></i>
<i class="ov" style="top:355.5px;height:3.9px;background:#c85a44"></i>
<i class="ov" style="top:389.0px;height:4.5px;background:#c85a44"></i>
<i class="ov" style="top:408.0px;height:4.0px;background:#e8341c"></i>
    </div>
  </div>
</div></div>
</body>
</html>
